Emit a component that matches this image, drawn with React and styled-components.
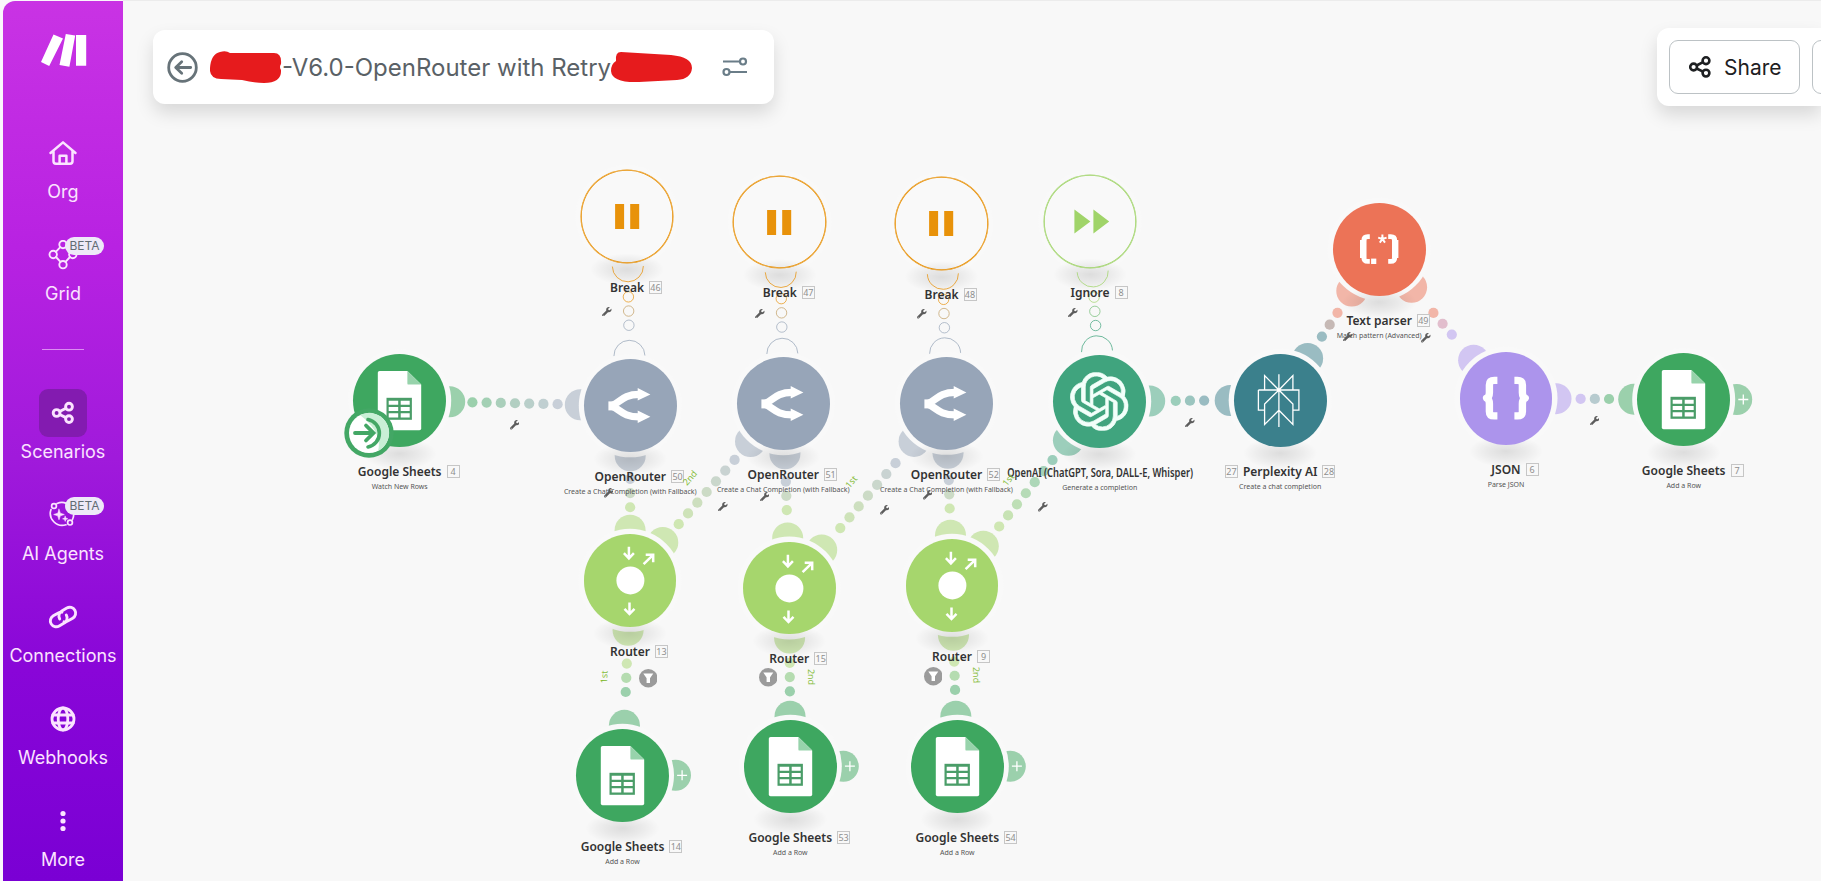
import { FaWrench } from "react-icons/fa";
import { SiOpenai } from "react-icons/si";
import styled, { createGlobalStyle } from "styled-components";

const R = 46.4; // module radius
const PORT_DISTANCE = 50;
const PORT_R = 15.5;
const DOT_GAP = 14.2;
const SIDE = 21.8; // distance of a wrench / filter / order label from its link

const NODES = [
  { id: "b46", type: "break", x: 504, y: 216.3, title: "Break", badge: 46 },
  { id: "b47", type: "break", x: 656.8, y: 222, title: "Break", badge: 47 },
  { id: "b48", type: "break", x: 818.5, y: 223.8, title: "Break", badge: 48 },
  { id: "ign", type: "ignore", x: 967, y: 221.5, title: "Ignore", badge: 8 },
  { id: "s4", type: "sheets", x: 276.7, y: 400.7, title: "Google Sheets", sub: "Watch New Rows", badge: 4, instant: true },
  { id: "o50", type: "router", x: 507.3, y: 405.8, title: "OpenRouter", sub: "Create a Chat Completion (with Fallback)", badge: 50 },
  { id: "o51", type: "router", x: 660.3, y: 403.7, title: "OpenRouter", sub: "Create a Chat Completion (with Fallback)", badge: 51 },
  { id: "o52", type: "router", x: 823.5, y: 403.3, title: "OpenRouter", sub: "Create a Chat Completion (with Fallback)", badge: 52 },
  { id: "ai", type: "openai", x: 976.7, y: 401.2, title: "OpenAI (ChatGPT, Sora, DALL-E, Whisper)", sub: "Generate a completion", narrow: true },
  { id: "pp", type: "perplexity", x: 1157.2, y: 400.2, title: "Perplexity AI", sub: "Create a chat completion", badge: 28, before: 27 },
  { id: "tp", type: "parser", x: 1256.2, y: 249.2, title: "Text parser", sub: "Match pattern (Advanced)", badge: 49 },
  { id: "js", type: "json", x: 1383, y: 398.3, title: "JSON", sub: "Parse JSON", badge: 6 },
  { id: "s7", type: "sheets", x: 1560.7, y: 399.5, title: "Google Sheets", sub: "Add a Row", badge: 7, last: true },
  { id: "r13", type: "split", x: 507, y: 580.3, title: "Router", badge: 13 },
  { id: "r15", type: "split", x: 666.3, y: 588, title: "Router", badge: 15 },
  { id: "r9", type: "split", x: 829, y: 585.3, title: "Router", badge: 9 },
  { id: "s14", type: "sheets", x: 499.5, y: 775.3, title: "Google Sheets", sub: "Add a Row", badge: 14, last: true },
  { id: "s53", type: "sheets", x: 667.3, y: 766.2, title: "Google Sheets", sub: "Add a Row", badge: 53, last: true },
  { id: "s54", type: "sheets", x: 834.3, y: 766.2, title: "Google Sheets", sub: "Add a Row", badge: 54, last: true },
];

const LINKS = [
  { from: "s4", to: "o50" },
  { from: "b46", to: "o50", hollow: true },
  { from: "b47", to: "o51", hollow: true },
  { from: "b48", to: "o52", hollow: true },
  { from: "ign", to: "ai", hollow: true },
  { from: "o50", to: "r13" },
  { from: "o51", to: "r15" },
  { from: "o52", to: "r9" },
  { from: "r13", to: "o51", order: "2nd" },
  { from: "r15", to: "o52", order: "1st" },
  { from: "r9", to: "ai", order: "1st" },
  { from: "ai", to: "pp" },
  { from: "pp", to: "tp" },
  { from: "tp", to: "js" },
  { from: "js", to: "s7" },
  { from: "r13", to: "s14", order: "1st", filter: true, flip: true },
  { from: "r15", to: "s53", order: "2nd", filter: true },
  { from: "r9", to: "s54", order: "2nd", filter: true },
];

const COLORS = {
  break: [232, 146, 10],
  ignore: [160, 212, 105],
  sheets: [62, 167, 96],
  router: [151, 165, 184],
  openai: [64, 164, 126],
  perplexity: [59, 128, 140],
  parser: [236, 115, 87],
  json: [172, 148, 236],
  split: [166, 214, 109],
};

const rgb = (c) => `rgb(${c.join(",")})`;
const mix = (a, b, t) => a.map((v, i) => Math.round(v + (b[i] - v) * t));
const byId = Object.fromEntries(NODES.map((n) => [n.id, n]));

const links = LINKS.map((link) => {
  const a = byId[link.from];
  const b = byId[link.to];
  const length = Math.hypot(b.x - a.x, b.y - a.y);
  const ux = (b.x - a.x) / length;
  const uy = (b.y - a.y) / length;
  const mx = (a.x + b.x) / 2;
  const my = (a.y + b.y) / 2;
  const count = length > 220 ? 7 : 3;
  const side = link.flip ? -1 : 1;
  const dots = Array.from({ length: count }, (_, i) => {
    const d = (i - (count - 1) / 2) * DOT_GAP;
    return {
      x: mx + ux * d,
      y: my + uy * d,
      color: rgb(mix(COLORS[a.type], COLORS[b.type], i / (count - 1))),
    };
  });
  return {
    ...link,
    a,
    b,
    ux,
    uy,
    dots,
    angle: (Math.atan2(uy, ux) * 180) / Math.PI,
    tool: { x: mx - uy * SIDE * side, y: my + ux * SIDE * side },
    label: { x: mx + uy * SIDE * side, y: my - ux * SIDE * side },
  };
});

const Port = ({ node, ux, uy, hollow }) => {
  const x = node.x + ux * PORT_DISTANCE;
  const y = node.y + uy * PORT_DISTANCE;
  const color = rgb(COLORS[node.type]);
  if (hollow) {
    const px = -uy * PORT_R;
    const py = ux * PORT_R;
    return (
      <path
        d={`M${x - px} ${y - py}A${PORT_R} ${PORT_R} 0 0 1 ${x + px} ${y + py}`}
        fill="none"
        stroke={color}
        strokeOpacity=".75"
      />
    );
  }
  return <circle cx={x} cy={y} r={PORT_R} fill={color} fillOpacity=".5" />;
};

const Connections = () => (
  <Wires>
    <defs>
      <radialGradient id="shade">
        <stop offset="0" stopColor="#000" stopOpacity=".11" />
        <stop offset=".5" stopColor="#000" stopOpacity=".06" />
        <stop offset="1" stopColor="#000" stopOpacity="0" />
      </radialGradient>
    </defs>
    {links.filter((l) => !l.hollow).map((l) => (
      <g key={l.from + l.to}>
        <Port node={l.a} ux={l.ux} uy={l.uy} />
        <Port node={l.b} ux={-l.ux} uy={-l.uy} />
      </g>
    ))}
    {NODES.filter((n) => n.last).map((n) => (
      <circle key={n.id} cx={n.x + 53} cy={n.y} r={PORT_R} fill={rgb(COLORS.sheets)} fillOpacity=".5" />
    ))}
    {NODES.map((n) => (
      <circle key={n.id} cx={n.x} cy={n.y} r="51.5" fill="#f9f9f9" />
    ))}
    {NODES.map((n) => (
      <ellipse key={n.id} cx={n.x} cy={n.y + 53} rx="37" ry="16" fill="url(#shade)" />
    ))}
    {links.filter((l) => l.hollow).map((l) => (
      <g key={l.from + l.to}>
        <Port node={l.a} ux={l.ux} uy={l.uy} hollow />
        <Port node={l.b} ux={-l.ux} uy={-l.uy} hollow />
      </g>
    ))}
    {links.map((l) =>
      l.dots.map((dot, i) =>
        l.hollow ? (
          <circle key={l.from + l.to + i} cx={dot.x} cy={dot.y} r="5.2" fill="none" stroke={dot.color} strokeOpacity=".7" />
        ) : (
          <circle key={l.from + l.to + i} cx={dot.x} cy={dot.y} r="5.1" fill={dot.color} fillOpacity=".5" />
        )
      )
    )}
    {NODES.filter((n) => n.last).map((n) => (
      <path key={n.id} d={`M${n.x + 54.6} ${n.y}h10m-5-5v10`} stroke="#fff" strokeWidth="1.3" />
    ))}
  </Wires>
);

/* icons inside the modules, drawn around 0,0 */
const Glyph = ({ type }) => {
  switch (type) {
    case "break":
      return <path d="M-12.300-12.400h9v25h-9zM2.800-12.400h9v25h-9z" fill="#e8920a" />;
    case "ignore":
      return <path d="M-16-12L0 0-16 12zM3-12L18.800 0 3 12z" fill="#a0d469" />;
    case "sheets":
      return (
        <>
          <path d="M-19.800-29.500H8L21.800-15.800V28q0 1.800-1.800 1.800h-39.800q-1.800 0-1.800-1.800v-55.700q0-1.800 1.800-1.800z" fill="#fff" />
          <path d="M8-29.500V-17q0 1.200 1.200 1.200h12.600z" fill="#97d3ab" />
          <path d="M-12.900-2.600h25.400v22h-25.400z" fill="#4a9d68" />
          <path
            d="M-10.700.3h9.500v4h-9.500zM1.300.3h9v4h-9zM-10.700 6.500h9.500v4h-9.500zM1.300 6.500h9v4h-9zM-10.700 12.900h9.500v4.200h-9.500zM1.300 12.900h9v4.200h-9z"
            fill="#fff"
          />
        </>
      );
    case "router":
      return (
        <>
          <path d="M-22-4h5v9h-5z" fill="#fff" />
          <path d="M-19 .5C-10-3-8-11 9-11M-19 .5C-10 4-8 11.500 9 11.500" fill="none" stroke="#fff" strokeWidth="7.200" />
          <path d="M7.300-17.300L20-11 7.300-4.800zM7.300 5.200L20 11.300 7.300 17.600z" fill="#fff" />
        </>
      );
    case "openai":
      return (
        <g transform="translate(-29.400 -29.200)">
          <SiOpenai size={58.6} color="#f2fffa" strokeWidth=".3" />
        </g>
      );
    case "perplexity":
      return (
        <path
          d="M-1.500-26.200v52.700M-15.800-10.400v-14.400L-1.500-10.400 12.500-24.800v14.400M-22-10.400h40.500V9.800h-6M-22-10.400V9.800h6.200M-1.500-10.400l-14.300 14v20.500L-1.500 9.800l14 14.300V3.600z"
          fill="none"
          stroke="#fff"
          strokeWidth="1.300"
        />
      );
    case "parser":
      return (
        <g fill="none" stroke="#fff">
          <path d="M-9.600-12.700h-2q-4 0-4 4V8q0 4 4 4h2M8.800-12.700h2.600q4 0 4 4V8q0 4-4 4H8.800" strokeWidth="4.800" />
          <path d="M-16.200-9.500v18M15.800-9.500v18" strokeWidth="6.400" />
          <path d="M-8.300 9.200h5.200v5.400h-5.200z" fill="#fff" stroke="none" />
          <path d="M3-10.400v-4.400M3-10.400l4.200-1.400M3-10.400l2.600 3.600M3-10.400L.4-6.800M3-10.400l-4.200-1.400" strokeWidth="2" />
        </g>
      );
    case "json":
      return (
        <g fill="none" stroke="#fff" strokeWidth="7.400" strokeLinejoin="round">
          <path d="M-9-18h-3q-5 0-5 4.500V-6q0 4.500-2.800 5.700 2.800 1.200 2.800 5.700v7.600q0 4.500 5 4.500h3" />
          <path d="M8-18h3q5 0 5 4.500V-6q0 4.500 2.800 5.700-2.800 1.200-2.800 5.700v7.600q0 4.500-5 4.500H8" />
        </g>
      );
    case "split":
      return (
        <>
          <circle r="14" fill="#fff" />
          <path
            d="M-1.500-33.600v11.600m-5-5.200l5 5.200 5-5.200M-.9 22v11.600m-5-5.200l5 5.200 5-5.200M13.200-16.200l9.600-9.400m-7.500 0h7.500v7.500"
            fill="none"
            stroke="#fff"
            strokeWidth="2.500"
          />
        </>
      );
    default:
      return null;
  }
};

const InstantMark = () => (
  <Mark viewBox="-25 -25 50 50">
    <circle r="24.700" fill="#43a765" />
    <circle r="20" fill="#fff" />
    <path d="M-9-18A20 20 0 0 1 9 18Q14 0-9-18z" fill="#c9efd6" />
    <path d="M-1-13.500A14 14 0 0 1-1 14" fill="none" stroke="#43a765" strokeWidth="3.600" strokeLinecap="round" />
    <path d="M-14 0H4M-3-7.500L4.500 0-3 7.500" fill="none" stroke="#43a765" strokeWidth="3.800" strokeLinecap="round" />
  </Mark>
);

const Module = ({ node }) => {
  const hollow = node.type === "break" || node.type === "ignore";
  return (
    <ModuleBox style={{ left: node.x, top: node.y }}>
      <Disc $hollow={hollow} $color={rgb(COLORS[node.type])}>
        <svg viewBox="-46.4 -46.4 92.8 92.8" width="92.8" height="92.8">
          <Glyph type={node.type} />
        </svg>
      </Disc>
      {node.instant && <InstantMark />}
      <Caption>
        <Side $left>{node.before && <Count>{node.before}</Count>}</Side>
        <Title $narrow={node.narrow}>{node.title}</Title>
        <Side>{node.badge && <Count>{node.badge}</Count>}</Side>
      </Caption>
      {node.sub && <Sub>{node.sub}</Sub>}
    </ModuleBox>
  );
};

const FilterIcon = () => (
  <svg viewBox="-9.3 -9.3 18.6 18.6" width="18.6" height="18.6">
    <circle r="9.3" fill="#9b9b9b" />
    <path d="M-5-4.800H5L1.700 0V4.800H-1.700V0z" fill="#fff" />
  </svg>
);

const ShareIcon = ({ weight = 2.6 }) => (
  <svg viewBox="-12 -12 24 24" width="24" height="24" fill="none" stroke="currentColor" strokeWidth={weight}>
    <circle cx="-6.4" r="3.4" />
    <circle cx="6" cy="-6.3" r="3.4" />
    <circle cx="6" cy="6.1" r="3.4" />
    <path d="M-3.400-1.500L3-4.800M-3.400 1.500L3 4.600" />
  </svg>
);

const NavIcon = ({ name }) => {
  const props = {
    viewBox: "-15 -15 30 30",
    width: 30,
    height: 30,
    fill: "none",
    stroke: "currentColor",
    strokeWidth: 2.5,
    strokeLinecap: "round",
    strokeLinejoin: "round",
  };
  switch (name) {
    case "Org":
      return (
        <svg {...props}>
          <path d="M-12.500 0L0-10.600 12.500 0M-9.500-2V8.300q0 2.400 2.400 2.400H7.100q2.400 0 2.400-2.400V-2M-3.400 10.300V2.800h6.800v7.500" />
        </svg>
      );
    case "Grid":
      return (
        <svg {...props} strokeWidth="1.9">
          <circle cy="-10.5" r="3.7" />
          <circle cx="-9.8" cy="-.5" r="3.7" />
          <circle cx="9.8" cy="-.5" r="3.7" />
          <circle cy="9.7" r="3.7" />
          <path d="M-2.700-7.800l-4.500 4.600M2.700-7.800l4.500 4.600M-7 2l4.500 4.800M7 2L2.500 6.800" />
        </svg>
      );
    case "Scenarios":
      return <ShareIcon weight={2.9} />;
    case "AI Agents":
      return (
        <svg {...props} strokeWidth="1.7">
          <path d="M-12-5.500A12 12 0 0 0 3 9.800M-6-11.500A12 12 0 0 1 9.500 4.500" />
          <circle cx="-9" cy="-9" r="2.4" />
          <circle cx="7" cy="7.6" r="2.4" />
          <path
            d="M-4-5.800l1.300 4 4 1.300-4 1.300-1.300 4-1.300-4-4-1.300 4-1.300zM2.200 1.200l.7 1.900 1.900.7-1.900.7-.7 1.900-.7-1.900-1.900-.7 1.900-.7z"
            fill="currentColor"
            strokeWidth=".6"
          />
        </svg>
      );
    case "Connections":
      return (
        <svg {...props} strokeWidth="2.9">
          <g transform="rotate(-30)">
            <path d="M1.500-4.700A5.900 5.900 0 0 0-2-5.900h-5.800a5.900 5.900 0 0 0 0 11.800H-2A5.900 5.900 0 0 0 3.800 0" />
            <path d="M-1.500 4.700A5.900 5.900 0 0 0 2 5.900h5.800a5.900 5.900 0 0 0 0-11.800H2A5.900 5.900 0 0 0-3.800 0" />
          </g>
        </svg>
      );
    case "Webhooks":
      return (
        <svg {...props} strokeWidth="2.8">
          <circle r="11" />
          <ellipse rx="4.8" ry="11" />
          <path d="M-10.200-4h20.400M-10.200 4h20.400" />
        </svg>
      );
    default:
      return (
        <svg {...props} fill="currentColor" stroke="none">
          <circle cy="-7.5" r="2.6" />
          <circle r="2.6" />
          <circle cy="7.5" r="2.6" />
        </svg>
      );
  }
};

const NavItem = ({ name, beta, active }) => (
  <Item>
    <IconTile $active={active}>
      <NavIcon name={name} />
      {beta && <Beta>BETA</Beta>}
    </IconTile>
    <ItemText>{name}</ItemText>
  </Item>
);

const App = () => {
  return (
    <Page>
      <GlobalStyle />
      <Sidebar>
        <Logo viewBox="0 0 46 33">
          <path d="M12.500.5L22 4.500 8.200 32 0 28zM24.800 0L34.200 1.600 28.400 32.800 18.500 31zM35 1h10.200v30.800H35z" fill="#fff" />
        </Logo>
        <NavGroup>
          <NavItem name="Org" />
          <NavItem name="Grid" beta />
        </NavGroup>
        <Divider />
        <NavGroup>
          <NavItem name="Scenarios" active />
          <NavItem name="AI Agents" beta />
          <NavItem name="Connections" />
          <NavItem name="Webhooks" />
          <NavItem name="More" />
        </NavGroup>
      </Sidebar>

      <Main>
        <Canvas>
          <Connections />
          {NODES.map((node) => (
            <Module key={node.id} node={node} />
          ))}
          {links.map((l) => (
            <Pin key={l.from + l.to} style={{ left: l.tool.x, top: l.tool.y }}>
              {l.filter ? <FilterIcon /> : <FaWrench size={9.5} />}
            </Pin>
          ))}
          {links.filter((l) => l.order).map((l) => (
            <Pin key={l.from + l.to} style={{ left: l.label.x, top: l.label.y }}>
              <Order $angle={l.flip ? l.angle - 180 : l.angle}>{l.order}</Order>
            </Pin>
          ))}
        </Canvas>

        <Header>
          <TitleCard>
            <svg width="31" height="31" viewBox="-15.5 -15.5 31 31" fill="none" stroke="#677379" strokeWidth="2.8">
              <circle r="13.8" />
              <path d="M8.200 0H-6M-.8-5.800L-6.800 0l6 5.800" strokeLinecap="round" strokeLinejoin="round" />
            </svg>
            <ScenarioName>
              <Scribble width="72" height="33" viewBox="0 0 72 33">
                <path d="M10 1Q16-1 20 2H64Q72 2 71 13Q69 16 71 19Q72 32 54 32Q44 32 32 29L11 28Q-1 28 0 17Q1 3 10 1Z" />
              </Scribble>
              <span>-V6.0-OpenRouter with Retry</span>
              <Scribble width="82" height="31" viewBox="0 0 82 31">
                <path d="M10 0L60 3Q81 5 81 16Q80 27 66 28L28 30Q1 31 0 19Q0 12 5 9Q4 0 10 0Z" />
              </Scribble>
            </ScenarioName>
            <svg width="26" height="20" viewBox="0 0 26 20" fill="none" stroke="#6a7d88" strokeWidth="2.2">
              <circle cx="21" cy="4.5" r="3" />
              <circle cx="4.5" cy="15" r="3" />
              <path d="M1 4.500h17M7.500 15H25" />
            </svg>
          </TitleCard>
          <ActionCard>
            <ActionButton>
              <ShareIcon />
              Share
            </ActionButton>
            <ActionButton />
          </ActionCard>
        </Header>
      </Main>
    </Page>
  );
};

export default App;

const GlobalStyle = createGlobalStyle`
  body {
    margin: 0;
    background: #f8f8f8;
    font-family: Inter, "Liberation Sans", sans-serif;
    overflow: hidden;
  }
  svg {
    display: block;
    flex-shrink: 0;
  }
`;

const Page = styled.div`
  display: flex;
  width: 1821px;
  height: 881px;
  overflow: hidden;
  box-sizing: border-box;
  padding-left: 3px;
  background: #faf6fb;
`;

const Sidebar = styled.nav`
  display: flex;
  flex-direction: column;
  align-items: center;
  width: 120px;
  flex-shrink: 0;
  box-sizing: border-box;
  margin-top: 1px;
  padding-top: 33px;
  border-radius: 12px 0 0 0;
  background: linear-gradient(#c933e4, #b822e2 28%, #a01adb 52%, #8906d8 76%, #7a00d4);
`;

const Logo = styled.svg`
  width: 46px;
  height: 33px;
  margin: 0 0 62px 1px;
`;

const NavGroup = styled.div`
  display: flex;
  flex-direction: column;
  gap: 27px;
`;

const Item = styled.div`
  display: flex;
  flex-direction: column;
  align-items: center;
  gap: 3px;
  color: #fbe3ff;
`;

const IconTile = styled.div`
  position: relative;
  display: flex;
  align-items: center;
  justify-content: center;
  width: 48px;
  height: 48px;
  border-radius: 9px;
  background: ${({ $active }) => ($active ? "#831bb0" : "transparent")};
`;

const Beta = styled.span`
  position: absolute;
  left: 26px;
  top: 6px;
  width: 39px;
  border-radius: 9px;
  background: #eee9f8;
  color: #626c74;
  font-size: 12px;
  line-height: 18px;
  text-align: center;
`;

const ItemText = styled.span`
  font-size: 18px;
  line-height: 23px;
  margin-bottom: 1px;
`;

const Divider = styled.div`
  width: 42px;
  height: 1px;
  margin: 43px 0 39px;
  background: #dc8df2;
`;

const Main = styled.main`
  display: grid;
  flex: 1;
  min-width: 0;
  grid-template: 881px / 1698px;
  border-top: 1px solid #ececec;
  margin-bottom: -1px;
  background: #f8f8f8;
`;

const Canvas = styled.section`
  position: relative;
  grid-area: 1 / 1;
  margin-top: -1px;
  color: #333;
  font-family: "Noto Sans", "Open Sans", sans-serif;
`;

const Wires = styled.svg`
  width: 1698px;
  height: 881px;
`;

const ModuleBox = styled.div`
  position: absolute;
  display: flex;
  flex-direction: column;
  align-items: center;
  width: 0;
  margin-top: -${R}px;
`;

const Disc = styled.div`
  width: ${R * 2}px;
  height: ${R * 2}px;
  flex-shrink: 0;
  border-radius: 50%;
  background: ${({ $hollow, $color }) => ($hollow ? "transparent" : $color)};
  box-shadow: ${({ $hollow, $color }) =>
    $hollow ? `0 0 0 0.5px ${$color}, inset 0 0 0 0.8px ${$color}` : "none"};
`;

const Mark = styled.svg`
  position: absolute;
  left: -56px;
  top: 53.5px;
  width: 50px;
  height: 50px;
`;

const Caption = styled.div`
  display: flex;
  align-items: center;
  height: 17px;
  margin-top: 16px;
`;

const Title = styled.span`
  font-size: 12px;
  font-weight: 600;
  line-height: 17px;
  white-space: nowrap;
  transform: ${({ $narrow }) => ($narrow ? "scale(0.78, 1.04)" : "none")};
`;

const Side = styled.span`
  display: flex;
  width: 18px;
  justify-content: ${({ $left }) => ($left ? "flex-start" : "flex-end")};
`;

const Count = styled.span`
  width: 11px;
  height: 11px;
  border: 1px solid #c6c6c6;
  color: #8f8f8f;
  font-size: 9px;
  line-height: 11px;
  text-align: center;
  display: flex;
  justify-content: center;
`;

const Sub = styled.span`
  margin-top: 2px;
  color: #555;
  font-size: 7px;
  line-height: 10px;
  white-space: nowrap;
`;

const Pin = styled.div`
  position: absolute;
  display: flex;
  align-items: center;
  justify-content: center;
  width: 0;
  height: 0;
  color: #5c5c5c;
`;

const Order = styled.span`
  color: #86bd3c;
  font-size: 9px;
  line-height: 10px;
  transform: rotate(${({ $angle }) => $angle}deg);
`;

const Header = styled.header`
  display: flex;
  grid-area: 1 / 1;
  justify-content: space-between;
  align-items: flex-start;
  z-index: 1;
  height: 110px;
`;

const TitleCard = styled.div`
  display: flex;
  align-items: center;
  width: 621px;
  height: 74px;
  box-sizing: border-box;
  margin: 29px 0 0 30px;
  padding: 0 26px 0 14px;
  border-radius: 12px;
  background: #fff;
  box-shadow: 0 9px 18px rgba(0, 0, 0, 0.13);

  > svg:last-child {
    margin-left: auto;
  }
`;

const ScenarioName = styled.div`
  display: flex;
  align-items: center;
  margin-left: 12px;
  color: #5a6166;
  font-size: 24px;
  white-space: nowrap;
`;

const Scribble = styled.svg`
  fill: #e61b1d;
`;

const ActionCard = styled.div`
  display: flex;
  gap: 12px;
  width: 164px;
  height: 78px;
  box-sizing: border-box;
  margin-top: 27px;
  padding: 12px 0 12px 12px;
  border-radius: 12px 0 0 12px;
  background: #fff;
  box-shadow: 0 9px 18px rgba(0, 0, 0, 0.13);
  overflow: hidden;
`;

const ActionButton = styled.button`
  display: flex;
  align-items: center;
  gap: 12px;
  width: 131px;
  flex-shrink: 0;
  padding: 0 0 0 18px;
  border: 1px solid #bcc2c5;
  border-radius: 9px;
  background: #fff;
  color: #1e2022;
  font-family: inherit;
  font-size: 21px;
`;
